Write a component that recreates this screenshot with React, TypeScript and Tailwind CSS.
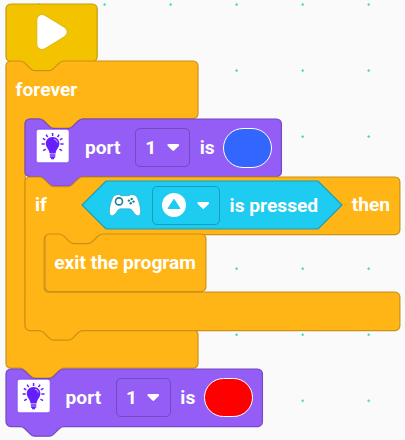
import type { ReactNode } from "react";

// Block outlines are described in block units; one unit is drawn as 1.2px.
const NOTCH = "c2 0 3 1 4 2l4 4c1 1 2 2 4 2h12c2 0 3 -1 4 -2l4 -4c1 -1 2 -2 4 -2";
const TAB = "c-2 0 -3 1 -4 2l-4 4c-1 1 -2 2 -4 2h-12c-2 0 -3 -1 -4 -2l-4 -4c-1 -1 -2 -2 -4 -2";

function statementPath(w: number, tab = true) {
  return `M0 4A4 4 0 0 1 4 0H12${NOTCH}H${w - 4}a4 4 0 0 1 4 4V44a4 4 0 0 1 -4 4H48${tab ? TAB : ""}H4a4 4 0 0 1 -4 -4Z`;
}

function hatPath(w: number) {
  return `M0 4A4 4 0 0 1 4 0H${w - 4}a4 4 0 0 1 4 4V44a4 4 0 0 1 -4 4H48${TAB}H4a4 4 0 0 1 -4 -4Z`;
}

// The bottom edge of the mouth only dips when the last nested block has a tab.
function mouthPath(w: number, mouth: number, innerTab = true) {
  const bottom = 48 + mouth + 32;
  return (
    `M0 4A4 4 0 0 1 4 0H12${NOTCH}H${w - 4}a4 4 0 0 1 4 4V44a4 4 0 0 1 -4 4H64${TAB}H20` +
    `a4 4 0 0 0 -4 4v${mouth - 8}a4 4 0 0 0 4 4${innerTab ? `H28${NOTCH}` : ""}H${w - 4}` +
    `a4 4 0 0 1 4 4V${bottom - 4}a4 4 0 0 1 -4 4H48${TAB}H4a4 4 0 0 1 -4 -4Z`
  );
}

function Outline({ d, fill, stroke }: { d: string; fill: string; stroke: string }) {
  return (
    <svg className="absolute left-0 top-0 h-px w-px overflow-visible">
      <path d={d} transform="scale(1.2)" fill={fill} stroke={stroke} strokeWidth="1" />
    </svg>
  );
}

const Row = ({ children }: { children: ReactNode }) => (
  <div className="relative flex h-[57.6px] items-center whitespace-nowrap">{children}</div>
);

function Bulb() {
  return (
    <svg className="ml-[11.1px] mt-[-3px] h-[34px] w-[33.4px] shrink-0 overflow-visible" viewBox="0 0 33.4 34">
      <rect x=".2" y=".2" width="33" height="33.6" rx="2.6" fill="#fff" stroke="#7f45f8" strokeWidth=".8" />
      <path
        d="M16.6 8.1c-4 0-6.800 2.900-6.800 6.500 0 3.900 3.200 5.300 3.800 9.900h6c.6-4.600 3.800-6 3.800-9.900 0-3.600-2.800-6.500-6.800-6.500Z"
        fill="#651fff"
      />
      <path d="M13.800 26h5.600M13.900 28h5.400M15.100 29.500h3" stroke="#651fff" strokeWidth="1.400" />
      <path
        d="M16.600 4v2.900M10.100 5.600l1.600 2.500M23.100 5.600l-1.600 2.500M5.600 14.900h3.200M24.400 14.900h3.200M7.200 21.600l2.500-1.500M26 21.600l-2.500-1.500M6.800 9.400l2.500 1.400M26.400 9.400l-2.500 1.400"
        stroke="#651fff"
        strokeWidth="1.500"
      />
      <path d="M18.200 10.300c1.800.4 2.800 1.600 3 3.200" fill="none" stroke="#fff" strokeWidth=".8" />
    </svg>
  );
}

const Arrow = () => (
  <svg className="h-[9px] w-[13px]" viewBox="0 0 13 9">
    <path d="M1.600 2.100h9.400L6.300 6.700Z" fill="#fff" stroke="#fff" strokeWidth="2.300" strokeLinejoin="round" />
  </svg>
);

function LightBlock({ colorClass }: { colorClass: string }) {
  return (
    <div className="relative">
      <Outline d={statementPath(213.7)} fill="#935df6" stroke="#7549bf" />
      <Row>
        <Bulb />
        <span className="ml-[15.1px] w-[50.400px]">port</span>
        <div className="flex h-[39px] w-[55px] items-center rounded-[5px] border border-[#7549bf] pl-[9px]">
          <span className="w-[21.500px]">1</span>
          <Arrow />
        </div>
        <span className="ml-[9.400px] w-[23.600px]">is</span>
        <div className={`h-[39.600px] w-[49.200px] rounded-full border border-white ${colorClass}`} />
      </Row>
    </div>
  );
}

const Gamepad = () => (
  <svg className="h-[24px] w-[34px]" viewBox="0 0 34 24">
    <path
      d="M7.300 2.200c2-.8 3.600-1.200 4.600-.3.700.6 1.200.8 2.200.8h5.800c1 0 1.500-.2 2.200-.8 1-.9 2.600-.5 4.600.3 1.600.7 2.300 1.800 3 3.500 1.700 4.100 2.700 8.200 2.900 12.200.1 2.700-.9 4.700-2.500 4.900-1.700.2-3.200-1.600-4.700-3.700-1.500-2.200-2.500-3.300-4.300-3.300h-8.200c-1.800 0-2.800 1.100-4.300 3.300-1.500 2.100-3 3.900-4.700 3.700-1.600-.2-2.600-2.200-2.500-4.900.2-4 1.200-8.100 2.900-12.200.7-1.700 1.400-2.800 3-3.500Z"
      fill="#fff"
      stroke="#239fbd"
      strokeWidth=".6"
    />
    <circle cx="11" cy="8.400" r="3.500" fill="#fff" stroke="#18809b" strokeWidth="1.600" />
    <g fill="#18809b">
      <circle cx="23.700" cy="6" r="1.200" />
      <circle cx="20.900" cy="7.600" r="1.200" />
      <circle cx="25.500" cy="8.600" r="1.200" />
      <circle cx="22.700" cy="10.200" r="1.200" />
    </g>
  </svg>
);

function PressedCondition() {
  return (
    <div className="relative flex h-[48px] w-[260.200px] items-center">
      <Outline d="M20 0H196.700L216.700 20L196.700 40H20L0 20Z" fill="#1ecbf1" stroke="#189dbd" />
      <div className="relative flex items-center pl-[25.800px]">
        <Gamepad />
        <div className="ml-[10px] flex h-[39px] w-[68px] items-center rounded-[5px] border border-[#189dbd] pl-[9px]">
          <svg className="h-[24px] w-[24px]" viewBox="0 0 24 24">
            <circle cx="12" cy="12" r="12" fill="#fff" />
            <path d="M12 6.300 18 15.500H6Z" fill="#1ecbf1" stroke="#1ecbf1" strokeLinejoin="round" />
          </svg>
          <div className="ml-[10.500px] flex">
            <Arrow />
          </div>
        </div>
        <span className="ml-[9.500px]">is pressed</span>
      </div>
    </div>
  );
}

const ORANGE = { fill: "#ffb515", stroke: "#cc9114" };

export default function App() {
  return (
    <main
      className="relative h-[440px] w-[405px] overflow-hidden bg-[#fafafa] pl-[6px] pt-[3.900px] text-[19.200px] font-bold leading-none text-white"
      style={{ fontFamily: 'Roboto, "Liberation Sans", sans-serif' }}
    >
      <svg className="absolute left-0 top-0 h-full w-full">
        <defs>
          <pattern id="grid" x="30" y="-5" width="66.050" height="66.050" patternUnits="userSpaceOnUse">
            <path d="M7.200 9.500h2.600M8.500 8.200v2.600" stroke="#43d9bf" strokeWidth="1.100" />
          </pattern>
        </defs>
        <rect width="405" height="440" fill="url(#grid)" />
      </svg>

      <div className="flex flex-col">
        <div className="relative">
          <Outline d={hatPath(76)} fill="#f4c300" stroke="#c39c12" />
          <Row>
            <svg className="ml-[28.500px] mt-[-1px] h-[38px] w-[34px]" viewBox="0 0 34 38">
              <path
                d="M7.200 6.800v24.400L26.800 19Z"
                fill="none"
                stroke="#d6bd19"
                strokeWidth="11.600"
                strokeLinejoin="round"
              />
              <path d="M7.200 6.800v24.400L26.800 19Z" fill="#fff" stroke="#fff" strokeWidth="9.800" strokeLinejoin="round" />
            </svg>
          </Row>
        </div>

        <div className="relative">
          <Outline d={mouthPath(160, 176)} {...ORANGE} />
          <Row>
            <span className="mb-[2px] ml-[9.600px]">forever</span>
          </Row>
          <div className="pl-[19.300px]">
            <LightBlock colorClass="bg-[#3366ff]" />
            <div className="relative">
              <Outline d={mouthPath(312.400, 48, false)} {...ORANGE} />
              <Row>
                <span className="mb-[1px] ml-[9.600px] w-[47.400px]">if</span>
                <PressedCondition />
                <span className="mb-[1px] ml-[9.300px]">then</span>
              </Row>
              <div className="pl-[19.300px]">
                <div className="relative">
                  <Outline d={statementPath(134.100, false)} {...ORANGE} />
                  <Row>
                    <span className="mb-[1.600px] ml-[9.600px]">exit the program</span>
                  </Row>
                </div>
              </div>
              <div className="h-[38.400px]" />
            </div>
          </div>
          <div className="h-[38.400px]" />
        </div>

        <LightBlock colorClass="bg-[#ff0000]" />
      </div>
    </main>
  );
}
